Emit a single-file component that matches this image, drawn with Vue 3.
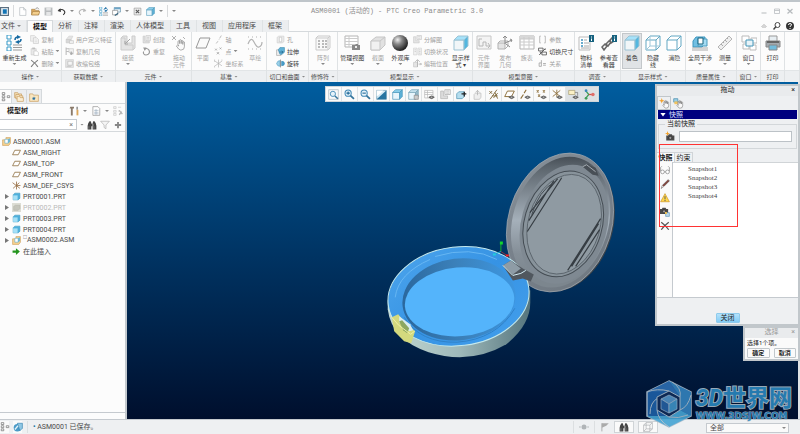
<!-- App.vue: CAD workspace with ribbon, model tree and drag dialog -->
<template>
  <div class="app">
    <header class="titlebar">
      <div class="quick">
        <template v-for="(q, i) in quickItems" :key="i">
          <i v-if="q === '|'" class="sep"></i>
          <i v-else-if="q === 'v'" class="caret"></i>
          <button v-else class="quick-btn" :aria-label="q">
            <svg viewBox="0 0 16 16" v-html="icons[q]"></svg>
          </button>
        </template>
      </div>
      <h1>ASM0001 (活动的) - PTC Creo Parametric 3.0</h1>
      <div class="win-buttons">
        <button v-for="w in ['min', 'max', 'closeWin']" :key="w" :aria-label="w">
          <svg viewBox="0 0 16 16" v-html="icons[w]"></svg>
        </button>
      </div>
    </header>

    <nav class="tabs">
      <button class="tab file">文件<i class="caret"></i></button>
      <button
        v-for="t in tabs"
        :key="t"
        :class="['tab', { active: t === activeTab }]"
        @click="activeTab = t"
      >{{ t }}</button>
      <div class="help-buttons">
        <button v-for="w in ['up', 'search', 'help']" :key="w" :aria-label="w">
          <svg viewBox="0 0 16 16" v-html="icons[w]"></svg>
        </button>
      </div>
    </nav>

    <section class="ribbon">
      <div v-for="g in groups" :key="g.name" class="group">
        <div class="group-body">
          <template v-for="(item, i) in g.items" :key="i">
            <div v-if="item.rows" class="stack">
              <button v-for="r in item.rows" :key="r[1]" :class="['small', { on: r[2] }]">
                <svg viewBox="0 0 16 16" v-html="icons[r[0]]"></svg>
                <span>{{ r[1] }}</span>
                <i v-if="r[3]" class="caret"></i>
              </button>
            </div>
            <button v-else :class="['big', { on: item.on, selected: item.selected, wide: item.wide }]">
              <svg viewBox="0 0 16 16" v-html="icons[item.icon]"></svg>
              <span v-for="line in item.label" :key="line">{{ line }}</span>
              <i v-if="item.menu" class="caret"></i>
            </button>
          </template>
        </div>
        <div class="group-name">{{ g.name }}<i v-if="g.menu" class="caret"></i></div>
      </div>
      <div class="group"><div class="group-body"></div><div class="group-name"></div></div>
    </section>

    <main class="work">
      <aside class="side">
        <div class="side-tabs">
          <button v-for="(s, i) in ['tree', 'folders', 'star']" :key="s" :class="{ active: i === 0 }" :aria-label="s">
            <svg viewBox="0 0 16 16" v-html="icons[s]"></svg>
          </button>
        </div>
        <div class="side-head">
          <strong>模型树</strong>
          <button aria-label="settings"><svg viewBox="0 0 16 16" v-html="icons.tools"></svg></button>
          <i class="caret"></i>
          <button aria-label="columns"><svg viewBox="0 0 16 16" v-html="icons.sheet"></svg></button>
          <i class="caret"></i>
          <button aria-label="show"><svg viewBox="0 0 16 16" v-html="icons.treeOff"></svg></button>
        </div>
        <div class="side-search">
          <div class="search-box">
            <input v-model="filter" type="text" aria-label="filter" />
            <button aria-label="clear" @click="filter = ''">×</button>
          </div>
          <i class="caret"></i>
          <button aria-label="find"><svg viewBox="0 0 16 16" v-html="icons.binoculars"></svg></button>
          <button aria-label="funnel"><svg viewBox="0 0 16 16" v-html="icons.funnel"></svg></button>
          <button aria-label="add"><svg viewBox="0 0 16 16" v-html="icons.plus"></svg></button>
        </div>
        <ul class="tree">
          <li v-for="n in nodes" :key="n.name" :class="{ root: n.root, off: n.off }">
            <i :class="['twist', { has: n.open }]"></i>
            <svg viewBox="0 0 16 16" v-html="icons[n.icon]"></svg>
            <span><sup v-if="n.mark">□</sup>{{ n.name }}</span>
          </li>
        </ul>
        <div class="side-foot"></div>
      </aside>

      <div class="viewport">
        <svg class="scene" viewBox="127 82 673 337">
          <defs>
            <linearGradient id="lidRim" x1="0" y1="0" x2="1" y2="1">
              <stop offset="0" stop-color="#89929a" />
              <stop offset=".5" stop-color="#77808a" />
              <stop offset="1" stop-color="#6f7880" />
            </linearGradient>
            <linearGradient id="lidBowl" x1=".1" y1="0" x2=".3" y2="1">
              <stop offset="0" stop-color="#353b42" />
              <stop offset=".14" stop-color="#5a636b" />
              <stop offset=".55" stop-color="#a5b0ba" />
              <stop offset=".8" stop-color="#848e97" />
              <stop offset="1" stop-color="#7c868e" />
            </linearGradient>
            <linearGradient id="side" x1="0" x2="1">
              <stop offset="0" stop-color="#c3d8d2" />
              <stop offset=".5" stop-color="#9fb9ba" />
              <stop offset="1" stop-color="#55757d" />
            </linearGradient>
            <linearGradient id="ring" x1="0" x2="1" y2="1">
              <stop offset="0" stop-color="#4da5ec" />
              <stop offset=".5" stop-color="#3693e4" />
              <stop offset="1" stop-color="#439fec" />
            </linearGradient>
            <linearGradient id="wall" x1="0" x2="1">
              <stop offset="0" stop-color="#2a679d" />
              <stop offset=".5" stop-color="#3b80b9" />
              <stop offset="1" stop-color="#3d96e0" />
            </linearGradient>
          </defs>
          <!-- open lid -->
          <g transform="rotate(16.6 560 222)">
            <ellipse cx="563" cy="223" rx="52" ry="70" fill="#3d444a" />
            <ellipse cx="561.500" cy="222.500" rx="52" ry="71" fill="url(#lidRim)" stroke="#a1a9b0" stroke-width=".7" />
            <ellipse cx="562" cy="222" rx="48" ry="67" fill="url(#lidBowl)" />
            <ellipse cx="566" cy="223" rx="43" ry="61" fill="#7f8992" />
            <ellipse cx="565" cy="223" rx="39" ry="54" fill="#88939b" stroke="#444c53" stroke-width="1" />
            <ellipse cx="566" cy="223" rx="36" ry="51" fill="#8f9aa2" stroke="#555e66" stroke-width=".8" />
          </g>
          <path d="M563 178 528.500 232M555 181 530 221M559 179 531 213M602 219 569 271M601 230 577 267M600 224 573 267" fill="none" stroke="#363d43" stroke-width="1.200" />
          <path d="M533 215q7-24 23-33" fill="none" stroke="#444c53" />
          <path d="M584 167l6-3 2 2 5 2 3 8-6-1z" fill="#484f56" />
          <path d="M584 167l4-2 9 7" fill="none" stroke="#a4abb1" />
          <!-- base -->
          <path d="M388.500 301v9q4 31 41 43 42 13 78-8 24-19 24-42v-12z" fill="url(#side)" />
          <ellipse cx="459.500" cy="297" rx="71" ry="49.500" transform="rotate(-7 459.500 297)" fill="url(#ring)" stroke="#c4e9ed" />
          <ellipse cx="460" cy="300" rx="57" ry="41" transform="rotate(-7 460 300)" fill="url(#wall)" />
          <ellipse cx="460.500" cy="302.500" rx="55" ry="34.500" transform="rotate(-5 460.500 302)" fill="#54b4fb" />
          <path d="M405 318q16 26 53 25 40-3 58-34" fill="none" stroke="#2f82c8" />
          <path d="M396 298q3-24 35-38M436 257q36-11 62 3" fill="none" stroke="#70bdf5" stroke-width=".8" />
          <!-- hinge -->
          <path d="M504 266l8-5 12 8 11 6-3 7-8-3-10 2z" fill="#50575e" />
          <path d="M504 266l8-5 10 8-8 6z" fill="#8e9ca6" />
          <path d="M504 266l10 10 8-2 5-3" fill="none" stroke="#d3edf5" />
          <!-- clip -->
          <path d="M392.500 318l6.500-3 5 6 12 11-4 12-7-2-10-10z" fill="#d3d97e" />
          <path d="M400 317l11 8 3 6-4 1-10-9z" fill="#d8edf0" />
          <path d="M400 322l3-1 7 8-2 5-4-3z" fill="#8ca760" />
          <path d="M392.500 318l7 8 12 9 4-3" fill="none" stroke="#eef0a8" />
          <!-- origin -->
          <path d="M502 244v8" stroke="#13b52b" />
          <path d="M502 252l6 4" stroke="#8a3243" />
          <path d="M502 252l-7 3" stroke="#1ba7c8" />
          <path d="M501 242h3v3h-3z" fill="#13d52b" />
          <path d="M507 255h3v2h-3z" fill="#f22" />
          <path d="M494 254h3v2h-3z" fill="#2cd" />
        </svg>

        <div class="view-tools">
          <button v-for="(v, i) in viewTools" :key="v" :class="{ pressed: i > 14 }" :aria-label="v">
            <svg viewBox="0 0 16 16" v-html="icons[v]"></svg>
          </button>
        </div>

        <div class="dialogs">
          <section class="drag">
            <header>拖动<button aria-label="close">×</button></header>
            <div class="drag-tools">
              <button class="active" aria-label="point drag"><svg viewBox="0 0 16 16" v-html="icons.hand"></svg></button>
              <button aria-label="body drag"><svg viewBox="0 0 16 16" v-html="icons.handBody"></svg></button>
            </div>
            <h2>快照</h2>
            <fieldset>
              <legend><label for="snap">当前快照</label></legend>
              <button aria-label="take snapshot"><svg viewBox="0 0 16 16" v-html="icons.camera"></svg></button>
              <input id="snap" v-model="current" type="text" />
            </fieldset>
            <div class="drag-tabs">
              <button class="active">快照</button>
              <button>约束</button>
            </div>
            <div class="drag-body">
              <div class="drag-icons">
                <button v-for="d in ['glasses', 'pencil', 'warn', 'cameraCopy', 'cross']" :key="d" :aria-label="d">
                  <svg viewBox="0 0 16 16" v-html="icons[d]"></svg>
                </button>
              </div>
              <ul>
                <li v-for="s in snapshots" :key="s" @click="current = s">{{ s }}</li>
              </ul>
            </div>
            <footer><button>关闭</button></footer>
            <div class="marker"></div>
          </section>
          <section class="pick">
            <header>选择<button aria-label="close">×</button></header>
            <p>选择1个项。</p>
            <div><button>确定</button><button>取消</button></div>
          </section>
        </div>
      </div>
    </main>

    <footer class="status">
      <button class="framed" aria-label="tree"><svg viewBox="0 0 16 16" v-html="icons.tree"></svg></button>
      <button class="framed" aria-label="browser"><svg viewBox="0 0 16 16" v-html="icons.globe"></svg></button>
      <i class="bar"></i>
      <p><b>•</b> ASM0001 已保存。</p>
      <i class="bar"></i>
      <svg viewBox="0 0 16 16" v-html="icons.dots"></svg>
      <i class="bar"></i>
      <svg viewBox="0 0 16 16" v-html="icons.flag"></svg>
      <button class="framed wide" aria-label="find"><svg viewBox="0 0 16 16" v-html="icons.binoculars"></svg></button>
      <button class="framed wide" aria-label="box"><svg viewBox="0 0 16 16" v-html="icons.wire"></svg></button>
      <div class="select-box">
        <select aria-label="filter">
          <option>全部</option>
        </select>
        <i class="caret"></i>
      </div>
    </footer>

    <div class="brand">
      <svg viewBox="0 0 46 48">
        <path d="M23 1 45 12v24L23 47 1 36V12z" fill="#1d5fa5" stroke="#a9bccb" stroke-width="1.500" />
        <path d="M23 1 45 12v24L34 30V17z" fill="#3382bd" />
        <path d="M45 36 23 47 1 36l22 0 11-6z" fill="#45a4d3" />
        <path d="M1 12 23 1l11 16-11-6z" fill="#2d6db0" />
        <path d="M1 12q10-4 22-1M34 17q2-9-8-15M34 30q8-3 11-15M23 37q9 2 19-2M11 30q1 10 12 17M12 18Q4 22 4 34" fill="none" stroke="#a9bccb" />
        <path d="M23 11 34 17v13l-11 7-12-7V17z" fill="#102c58" stroke="#a9bccb" />
        <path d="M23 15 31 19l-8 5-8-5z" fill="#5391c3" stroke="#9db9d0" stroke-width=".7" />
        <path d="M15 19l8 5v9l-8-4z" fill="#255f9f" stroke="#9db9d0" stroke-width=".7" />
        <path d="M31 19l-8 5v9l8-4z" fill="#3d91c4" stroke="#9db9d0" stroke-width=".7" />
      </svg>
      <div>
        <strong><em>3D</em>世界网</strong>
        <small>WWW.3DSJW.COM</small>
      </div>
    </div>
  </div>
</template>

<script setup>
import { ref } from 'vue';

const activeTab = ref('模型');
const filter = ref('');
const current = ref('');

const tabs = ['模型', '分析', '注释', '渲染', '人体模型', '工具', '视图', '应用程序', '框架'];
const snapshots = ['Snapshot1', 'Snapshot2', 'Snapshot3', 'Snapshot4'];
const quickItems = ['app', '|', 'page', 'open', 'save', 'undo', 'v', 'redo', 'v', 'regen', 'windows', 'v', 'closeBox', 'cube', 'v', '|', 'v'];
const viewTools = ['zoomFit', 'zoomIn', 'zoomOut', 'repaint', 'cube', 'cubeSaved', 'viewMgr', 'explodeOff', 'cubeArrow', 'cubeOff', 'datumAll', 'datumPlane', 'datumAxis', 'datumPoint', 'datumCsys', 'note', 'spin'];

// small rows: [icon, label, enabled, has menu]
const groups = [
  { name: '操作', menu: true, items: [
    { icon: 'regen', label: ['重新生成'], on: true, menu: true, wide: true },
    { rows: [['copy', '复制'], ['paste', '粘贴', false, true], ['cross', '删除', false, true]] },
  ] },
  { name: '获取数据', menu: true, items: [
    { rows: [['udf', '用户定义特征'], ['copyGeom', '复制几何'], ['shrink', '收缩包络']] },
  ] },
  { name: '元件', menu: true, items: [
    { icon: 'assemble', label: ['组装'], menu: true },
    { rows: [['create', '创建'], ['repeat', '重复']] },
    { icon: 'dragHand', label: ['拖动', '元件'] },
  ] },
  { name: '基准', menu: true, items: [
    { icon: 'plane', label: ['平面'] },
    { rows: [['axis', '轴'], ['point', '点', false, true], ['csys', '坐标系']] },
    { icon: 'sketch', label: ['草绘'] },
  ] },
  { name: '切口和曲面', menu: true, items: [
    { rows: [['hole', '孔'], ['extrude', '拉伸', true], ['revolve', '旋转', true]] },
  ] },
  { name: '修饰符', menu: true, items: [{ icon: 'pattern', label: ['阵列'], menu: true }] },
  { name: '模型显示', menu: true, items: [
    { icon: 'viewMgrBig', label: ['管理视图'], on: true, menu: true, wide: true },
    { icon: 'section', label: ['截面'], menu: true },
    { icon: 'sphere', label: ['外观库'], on: true, menu: true },
    { rows: [['explodeOff', '分解图'], ['toggle', '切换状况'], ['editPos', '编辑位置']] },
    { icon: 'cubeFull', label: ['显示样', '式 ▾'], on: true },
  ] },
  { name: '模型意图', menu: true, items: [
    { icon: 'iface', label: ['元件', '界面'] },
    { icon: 'publish', label: ['发布', '几何'] },
    { icon: 'table', label: ['族表'] },
    { rows: [['brackets', '参数'], ['dims', '切换尺寸', true], ['relation', '关系']] },
  ] },
  { name: '调查', menu: true, items: [
    { icon: 'bom', label: ['物料', '清单'], on: true },
    { icon: 'chain', label: ['参考查', '看器'], on: true },
  ] },
  { name: '显示样式', menu: true, items: [
    { icon: 'cubeFull', label: ['着色'], on: true, selected: true },
    { icon: 'cubeWire', label: ['隐藏', '线'], on: true },
    { icon: 'cubeLine', label: ['消隐'], on: true },
  ] },
  { name: '质量属性', menu: true, items: [
    { icon: 'interfere', label: ['全局干涉'], on: true, menu: true, wide: true },
    { icon: 'ruler', label: ['测量'], on: true, menu: true },
  ] },
  { name: '窗口', menu: true, items: [{ icon: 'winGrid', label: ['窗口'], on: true, menu: true }] },
  { name: '打印', items: [{ icon: 'printer', label: ['打印'], on: true }] },
];

const nodes = [
  { name: 'ASM0001.ASM', icon: 'asm', root: true },
  { name: 'ASM_RIGHT', icon: 'treePlane' },
  { name: 'ASM_TOP', icon: 'treePlane' },
  { name: 'ASM_FRONT', icon: 'treePlane' },
  { name: 'ASM_DEF_CSYS', icon: 'treeCsys' },
  { name: 'PRT0001.PRT', icon: 'part', open: true },
  { name: 'PRT0002.PRT', icon: 'partOff', open: true, off: true },
  { name: 'PRT0003.PRT', icon: 'part', open: true },
  { name: 'PRT0004.PRT', icon: 'part', open: true },
  { name: 'ASM0002.ASM', icon: 'asm', open: true, mark: true },
  { name: '在此插入', icon: 'insert' },
];

// path with fill and stroke
const p = (d, fill = 'none', stroke = 'none', w = 1) =>
  `<path d="${d}" fill="${fill}" stroke="${stroke}" stroke-width="${w}"/>`;
const box = (front, top, side, line) =>
  p('M1 5h10v10H1z', front, line) + p('M1 5l4-4h10l-4 4z', top, line) + p('M11 5l4-4v10l-4 4z', side, line);
const eye = p('M7 12q4-4 8 0q-4 4-8 0z', '#777', '#555') + p('M10 12h2', 'none', '#ddd');
const glass = '<circle cx="6" cy="6" r="4.500" fill="#e5f2fa" stroke="#3f88b5" stroke-width="1.500"/>' + p('M9.500 9.500l5 5', 'none', '#35749b', 2.5);
const handShape = p('M5 8V4q1-1 2 0v3V2.500q1-1 2 0V7 3.500q1-1 2 0V8 5q1-1 2 0v6q0 4-4 4H8q-2 0-5-5 1-2 3 0z', '#fafafa', '#777', 1);
const camera = p('M2 7h3l1-2h5l1 2h3v8H2z', '#4a4a4a') + '<circle cx="8.500" cy="11" r="2.500" fill="#999" stroke="#222"/>';
const spark = p('M4 0l1 3 3 1-3 1-1 3-1-3-3-1 3-1z', '#f3a22b');

const icons = {
  app: p('M0 0h16v16H0z', '#5c6f80') + p('M2 2h12v12H2z', '#e5edf3') + p('M5 4h7v8H5z', '#1274b5'),
  page: p('M3 1h7l4 4v10H3z', '#fff', '#a5adb3') + p('M10 1v4h4', 'none', '#a5adb3'),
  open: p('M1 4h6l1 2h6v8H1z', '#d9a75c', '#a27a3d') + p('M3 8h13l-3 6H1z', '#f3ce8c', '#a27a3d') + p('M8 3q4-4 6 1', 'none', '#555'),
  save: p('M1 1h14v14H1z', '#b9bcbe') + p('M4 1h8v5H4zM4 9h8v6H4z', '#e5e6e7'),
  undo: p('M3 6q9-4 11 3 0 3-3 5', 'none', '#333', 2) + p('M1 7l5-5 1 7z', '#333'),
  redo: p('M13 6Q4 2 2 9q0 3 3 5', 'none', '#b8b8b8', 2) + p('M15 7l-5-5-1 7z', '#b8b8b8'),
  regen: p('M1 0h4v4H1zM1 6h4v4H1zM1 12h4v4H1z', '#fff', '#3397c6') + p('M7 10h9M7 12.500h9M7 15h9', 'none', '#9a9a9a') + p('M9 5q0-3 3-3M15 4q0 3-3 3', 'none', '#176aa2', 1.5) + p('M11 0l4 2-4 2zM13 5v4L9 7z', '#176aa2'),
  windows: p('M4 1h11v8H4z', '#eaf4fa', '#447a9b') + p('M4 1h11v3H4z', '#6ca5c7') + p('M1 6h9v8H1z', '#fff', '#777') + p('M5 15l6-4', 'none', '#34637e', 2),
  closeBox: p('M2 2h12v12H2z', '#eee', '#888') + p('M5 5l6 6M11 5l-6 6', 'none', '#555', 2),
  cube: box('#e7f5fc', '#8cd0ec', '#5cb1d7', '#4c97ba'),
  cubeFull: box('#f1f6f8', '#a6e2fa', '#53b7df', '#9cc3d4'),
  cubeWire: p('M1 5h10v10H1zM1 5l4-4h10l-4 4M15 1v10l-4 4', '#fff', '#62a7c3') + p('M5 1v10h10M5 11l-4 4', 'none', '#9fc8da'),
  cubeLine: p('M1 5h10v10H1zM1 5l4-4h10l-4 4M15 1v10l-4 4', '#fff', '#62a7c3'),
  min: p('M3 11h10v2H3z', '#b6babd'),
  max: p('M3 4h10v9H3zM3 7h10', 'none', '#b6babd', 1.5),
  closeWin: p('M3 4l10 9M13 4L3 13', 'none', '#b6babd', 2.5),
  up: p('M3 10l5-5 5 5M5 12l3-3 3 3', 'none', '#777', 1.2),
  search: '<circle cx="9" cy="6" r="5" fill="#fff" stroke="#444" stroke-width="2"/>' + p('M6 9l-5 6', 'none', '#444', 3),
  help: '<circle cx="8" cy="8" r="8" fill="#333"/>' + p('M5 6q0-3 3-3t3 3q0 1-3 3v1M8 12v2', 'none', '#fff', 2),
  copy: p('M1 1h7l2 2v8H1z', '#eee', '#bbb') + p('M6 5h6l3 3v7H6z', '#f6f6f6', '#aaa') + p('M8 9h5M8 12h5', 'none', '#bbb'),
  paste: p('M2 3h9v11H2z', '#e3e3e3', '#b5b5b5') + p('M4 1h5v3H4z', '#aaa') + p('M7 7h5l3 3v5H7z', '#fff', '#aaa'),
  cross: p('M2 2q7 5 12 12M14 2Q6 8 2 14', 'none', '#555', 2),
  udf: p('M2 8l5-6h7l-3 6z', '#ddd', '#bbb') + p('M2 8h9v6H2z', '#ccc', '#b5b5b5') + p('M8 10h7v5H8z', '#eee', '#aaa'),
  copyGeom: p('M2 1v13M2 8h5M2 3h5', 'none', '#aaa', 2) + p('M7 3h8v7H7z', '#eee', '#aaa') + p('M11 8v6M9 12h6', 'none', '#888', 2),
  shrink: p('M1 1h14v14H1z', '#ddd', '#bbb') + p('M5 4h8v7H5z', '#f5f5f5', '#999') + p('M3 13h8', 'none', '#999'),
  assemble: p('M1 3l2-2h4v7h5V1h3v12l-2 2H1z', '#ddd', '#bdbdbd') + p('M1 3h4v7h8v5', 'none', '#bdbdbd') + p('M10 4L5 9M5 6v3h3', 'none', '#888'),
  create: p('M2 2h3v9h8v3H2z', '#ddd', '#aaa') + p('M7 1h8v9H7z', '#eee', '#aaa') + p('M9 4h4M9 7h4', 'none', '#999'),
  repeat: p('M4 4q5-3 8 1 3 5-1 8-5 3-8-1-1-2 0-4', 'none', '#777', 2) + p('M2 1h6L5 7z', '#777'),
  dragHand: '<g transform="translate(3 3) scale(.8)">' + handShape + '</g>' + p('M1 1l4 4M5 1L1 5M12 2l2 2', 'none', '#999'),
  plane: p('M5 3h10l-4 10H1z', '#fafafa', '#777'),
  axis: p('M13 1l-3 5M9 8l-1 1M7 11l-3 4', 'none', '#999', 1.5),
  point: p('M2 3l3 3M5 3L2 6M10 1l3 3M13 1l-3 3M5 9l4 4M9 9l-4 4', 'none', '#888', 1.5),
  csys: p('M8 1v14M2 4l12 8M14 4L2 12M1 1v4M1 12v3M14 1v2', 'none', '#999', 1.2),
  sketch: p('M1 9q3-8 6-2t5 5q3-1 3-5', 'none', '#999', 1.2) + p('M1 2h1M5 2h1M9 2h1M13 2h1M1 14h1M5 14h1M9 14h1M13 14h1', 'none', '#999'),
  hole: p('M2 4l3-2h9v10l-3 2H2z', '#e5e5e5', '#bbb') + p('M6 4h4v8H6z', '#fff', '#aaa'),
  extrude: p('M1 5h8v10H1z', '#eee', '#999') + p('M4 5l3-4h8v8l-4 4H7z', '#62b3d8', '#3987ad') + p('M6 9h6M10 7l3 2-3 2', 'none', '#135276'),
  revolve: p('M1 8q2-6 6-5v10Q2 13 1 8z', '#9cd0e8', '#55a0c4') + p('M10 4q5 0 5 4t-5 4z', '#4aa0cc', '#2c80ab') + p('M8 1v14', 'none', '#555'),
  pattern: p('M1 3h12v12H1zM1 3l2-2h12v12l-2 2M13 3l2-2', '#f8f8f8', '#bbb') + p('M3 6h2M7 6h2M10 6h2M3 9h2M7 9h2M10 9h2M3 12h2M7 12h2M10 12h2', 'none', '#888', 1.5),
  viewMgrBig: p('M1 1h13v11H1z', '#fff', '#b5b5b5') + p('M1 3.500h13M1 6.500h13M1 9.500h13M5 1v11', 'none', '#ccc') + p('M8 10h3l1-1h2v1h2v5H8z', '#888') + p('M11 12h2', 'none', '#eee', 2),
  section: p('M1 6l5-4h9v8l-5 5H1z', '#d8d8d8', '#b5b5b5') + p('M1 6h9v9H1z', '#eee', '#b5b5b5') + p('M10 6l5-4', 'none', '#b5b5b5'),
  sphere: '<defs><radialGradient id="ball" cx=".35" cy=".3" r=".7"><stop offset="0" stop-color="#eee"/><stop offset=".4" stop-color="#888"/><stop offset="1" stop-color="#222"/></radialGradient></defs><circle cx="8" cy="8" r="8" fill="url(#ball)"/>',
  explodeOff: p('M1 3h4v7h6v4H1z', '#ddd', '#b5b5b5') + p('M7 1h8v7H7z', '#f0f0f0', '#aaa') + p('M9 3h4M9 6h4', 'none', '#b5b5b5'),
  toggle: p('M1 2h6v12H1zM9 2h6v12H9z', '#eee', '#bbb') + p('M3 5h2M3 8h2M11 5h2M11 8h2M11 11h2', 'none', '#999'),
  editPos: p('M1 6h7v8H1z', '#ddd', '#aaa') + p('M8 2v12M4 5l4-4 4 4M10 9h5M13 7l2 2-2 2', 'none', '#999', 1.5),
  iface: p('M1 1h14v13H1z', '#f1f1f1', '#b5b5b5') + p('M3 4v7h4V7h3v4h4M3 4h3M12 8l2 3-2 2', 'none', '#a0a0a0'),
  publish: p('M1 8h7v6H1z', '#ddd', '#999') + p('M1 8l2-2h8v5l-3 3', 'none', '#999') + p('M8 9V1M6 3l2-2 2 2M8 8l7-3M13 4l2 1-1 2M9 9l4 3', 'none', '#666'),
  table: p('M1 1h14v13H1z', '#fff', '#999') + p('M1 1h14v3H1z', '#ccc') + p('M1 4h14M1 7h14M1 10h14M5 2v12M10 2v12', 'none', '#bbb'),
  brackets: p('M5 2H3v12h2M11 2h2v12h-2', 'none', '#999', 1.5),
  dims: p('M1 2h8M1 2v5h8V2M7 9h8v5H7zM2 14L13 3', 'none', '#555', 1.5) + p('M3 9h2v4M11 4h3', 'none', '#555', 1.5),
  relation: p('M6 2v11H2V7h4M9 8h5M9 11h5', 'none', '#888', 1.5),
  bom: p('M1 2h11v13H1z', '#fff', '#bbb') + p('M3 5h2M3 8h2M3 11h2', 'none', '#3a91bd', 1.5) + p('M6 5h3M6 8h5M6 11h5M3 13h8', 'none', '#aaa') + p('M11 0h5v7h-5z', '#17627f') + p('M13.500 1.500v1M13.500 3.500V6', 'none', '#fff'),
  chain: p('M1 12l3-3 2 2-3 4zM5 9l3-3 2 1-3 4zM9 5l2-2 2 3-3 2z', 'none', '#666', 1.5) + p('M11 0h5v7h-5z', '#17627f') + p('M13.500 1.500v1M13.500 3.500V6', 'none', '#fff'),
  interfere: p('M1 6l3-4h9v7l-3 3H1z', '#71bfe2', '#3d95bd') + p('M6 4h9v7H6z', '#a5dcf3', '#4b9abc') + p('M6 3h5v6H6z', '#fff', '#17627f') + p('M0 13h16M0 15h16', 'none', '#aaa'),
  ruler: p('M1 12L12 1l3 3L4 15z', '#eee', '#b5b5b5') + p('M4 9l2 2M6 7l1 1M8 5l2 2M10 3l1 1', 'none', '#aaa'),
  winGrid: p('M1 1h7v6H1zM10 3h6v5h-6zM2 9h6v5H2zM9 10h6v5H9z', '#fff', '#bbb') + p('M5 5h7v6H5z', '#e8f4f9', '#4698ba'),
  printer: p('M4 1h8v6H4z', '#e7eef2', '#999') + p('M1 6h14v6H1z', '#a5abb0', '#888') + p('M2 7h12', 'none', '#666', 2) + p('M4 10h8v5H4z', '#72bcdc', '#888'),
  tree: p('M2 1h4v3H2zM2 6h4v3H2zM2 11h4v3H2zM10 6h4v3h-4z', '#fff', '#777', 1.2),
  folders: p('M1 1h5l1 2h5v6H1z', '#f5dfb8', '#c39755') + p('M3 4h5l1 2h5v5H3z', '#f8e7c8', '#c39755') + p('M5 7h4l1 2h5v6H5z', '#fbeed4', '#c39755'),
  star: p('M1 3h5l1 2h8v10H1z', '#f9e6c0', '#c39755') + p('M8 7l1 2h2l-2 2v2l-2-1-1 1v-2L5 9h2z', '#286f9f'),
  tools: p('M2 1h6v3H6v11H3V4H1z', '#8a7a6a') + p('M13 1v5', 'none', '#777', 2) + p('M12 6h3v9h-3z', '#dca75a'),
  sheet: p('M3 1h8l3 3v11H3z', '#fff', '#888') + p('M5 7h7M5 10h7M5 12.500h7M8 5v9', 'none', '#9ab', 1),
  treeOff: p('M1 1h4v3H1zM1 7h4v3H1zM1 12h4v3H1zM8 2h5M8 8h3', '#f6f6f6', '#c5c5c5') + p('M10 7l5 6M14 9l-4 5', 'none', '#b5b5b5', 2),
  binoculars: p('M2 5l2-3h2l1 3v10H1V9zM14 5l-2-3h-2L9 5v10h6V9zM6 6h4v4H6z', '#444') + p('M3 10v4M11 10v4', 'none', '#999'),
  funnel: p('M1 2h14L9.500 8v6l-3-2V8z', '#f5f5f5', '#aaa'),
  plus: p('M8 3v10M3 8h10', 'none', '#888', 3),
  asm: p('M1 5h6V1h8v10l-3 4H1z', '#f6d18f', '#c79a52') + p('M5 4h6v7H5z', '#fff', '#57a9cd') + p('M11 4l3-2v7l-3 2z', '#5db4da'),
  treePlane: p('M5 4h10l-4 8H1z', '#fff', '#93764a', 1.5),
  treeCsys: p('M8 1v14M1 3l13 10M13 3L2 13M9 8h6', 'none', '#93683c', 1.4),
  part: p('M2 5l3-3h9v9l-3 3H2z', '#4fb0dc', '#4199c0') + p('M2 6h8v8H2z', '#a6e0f6'),
  partOff: p('M0 0h16v16H0z', '#ddddd4') + p('M3 6l3-2h8v6l-3 3H3z', '#c5c5bb', '#b2b2a8'),
  insert: p('M1 6h6V2l7 6-7 6v-4H1z', '#25951f'),
  zoomFit: p('M1 1h14v14H1z', 'none', '#a5b5bf') + '<g transform="translate(2 2) scale(.85)">' + glass + '</g>',
  zoomIn: glass + p('M3.500 6h5M6 3.500v5', 'none', '#1c6594', 1.5),
  zoomOut: glass + p('M3.500 6h5', 'none', '#1c6594', 1.5),
  repaint: p('M1 2h14v13H1z', '#d6ebf5', '#6597b1') + p('M1 15L15 2v13z', '#2774a0') + p('M1 2h10L1 11z', '#fff'),
  cubeSaved: box('#e7f5fc', '#c6e2ee', '#94b9c9', '#79a5b8') + p('M9 9h6v6H9z', '#ccc', '#888'),
  viewMgr: p('M1 2h12v11H1zM1 5h12M1 8h12M5 2v11', '#fff', '#b5b5b5') + eye,
  cubeArrow: p('M1 7l3-3h8v7l-3 3H1z', '#b5ddee', '#4e95b4') + p('M8 7h7M12 4v7', 'none', '#222', 1.8),
  cubeOff: p('M3 8l2-2h8v6l-2 3H3z', '#eee', '#bbb') + p('M8 9V2M5 5l3-3 3 3', 'none', '#aaa'),
  datumAll: p('M2 3l4 4M6 3L2 7M13 1L3 15M6 10h8M10 5l4 9M14 6l-6 7', 'none', '#7c6434', 1.3),
  datumPlane: p('M5 3h10l-4 8H1z', '#fff', '#8d6f3b', 1.4) + eye,
  datumAxis: p('M9 1L6 6M5 8L1 14', 'none', '#8d6f3b', 1.6) + eye,
  datumPoint: p('M1 2l3 3M4 2L1 5M10 2l3 3M13 2l-3 3M3 8l3 3M6 8l-3 3', 'none', '#8d6f3b', 1.5) + eye,
  datumCsys: p('M7 1v11M1 2l11 9M12 2L1 11', 'none', '#8d6f3b', 1.3) + eye,
  note: p('M1 2h9v6H1z', '#fbf0c5', '#a69a70') + p('M10 5l4 0v5', 'none', '#777') + eye,
  spin: p('M2 2l5 6-5 6', 'none', '#3f9d57', 1.8) + p('M7 8h7', 'none', '#d34f4a', 1.8) + '<circle cx="13" cy="8" r="2.500" fill="#e06e69"/><circle cx="3" cy="2.500" r="2" fill="#3b87b9"/><circle cx="3" cy="13.500" r="2" fill="#3f9d57"/>',
  hand: spark + '<g transform="translate(3 2) scale(.85)">' + handShape + '</g>',
  handBody: p('M1 1h6v5H1z', '#9ccfe5', '#438bad') + p('M2 5h5v4H2z', '#f1c35f') + '<g transform="translate(3 2) scale(.85)">' + handShape + '</g>',
  camera: camera + spark,
  cameraCopy: '<g transform="translate(-2 -4)">' + camera + '</g>' + p('M9 9h6v6H9z', '#b8d7ea', '#5a92b5') + p('M8 8h3v3H8z', '#f0c24f'),
  glasses: '<circle cx="4" cy="11" r="3" fill="#fff" stroke="#777"/><circle cx="12" cy="11" r="3" fill="#fff" stroke="#777"/>' + p('M1 10V4l2-2M15 10V4l-2-2M7 11h2', 'none', '#777'),
  pencil: p('M2 15l2-5 9-9 2 2-9 9z', '#8c4138', '#555') + p('M2 15l2-5 2 2z', '#ddd'),
  warn: p('M8 1l7 13H1z', '#ffd84d', '#c78d1b') + p('M8 5v5M8 11v2', 'none', '#555', 1.5),
  globe: '<circle cx="7" cy="9" r="6" fill="#4b9bc8"/>' + p('M7 2h8v8l-4 4z', '#8fc7e4', '#2e7fae') + p('M3 12l5-6', 'none', '#e5f4fb', 2),
  dots: '<circle cx="8" cy="8" r="4" fill="#b0b4b7"/><circle cx="1.500" cy="8" r="1.500" fill="#c9cccf"/><circle cx="14.500" cy="8" r="1.500" fill="#c9cccf"/>',
  flag: p('M3 2v13', 'none', '#aaa', 1.5) + p('M3 2h11l-4 4-7 3z', '#aaa'),
  wire: p('M1 5h10v10H1zM1 5l4-4h10l-4 4M15 1v10l-4 4M5 1v10h10M5 11l-4 4', 'none', '#a5a9ac'),
};
</script>

<style>
body {
  margin: 0;
}
</style>

<style scoped>
.app {
  position: relative;
  display: flex;
  flex-direction: column;
  min-height: 100vh;
  box-sizing: border-box;
  border-top: 2px solid #bfc5ca;
  background: #fcfcfc;
  color: #4a4a4a;
  font: 7px/8px Roboto, "Noto Sans CJK SC", sans-serif;
  overflow: hidden;
}
.app * {
  box-sizing: border-box;
}
button,
input,
select {
  margin: 0;
  padding: 0;
  border: 0;
  background: none;
  color: inherit;
  font: inherit;
}
svg {
  display: block;
  flex: none;
}
h1, h2, p, ul {
  margin: 0;
  padding: 0;
  font: inherit;
  list-style: none;
}
.caret {
  flex: none;
  width: 4px;
  height: 2px;
  background: #888;
  clip-path: polygon(0 0, 100% 0, 50% 100%);
}

/* title bar */
.titlebar {
  display: grid;
  grid-template-columns: 1fr auto 1fr;
  align-items: center;
  height: 18px;
  padding-right: 6px;
}
.titlebar h1 {
  color: #8c8c8c;
  font-family: "Liberation Mono", "Noto Sans CJK SC", monospace;
}
.quick {
  display: flex;
  align-items: center;
  gap: 4px;
}
.quick svg {
  width: 9px;
  height: 9px;
}
.sep {
  width: 1px;
  height: 12px;
  background: #d8dadc;
}
.win-buttons,
.help-buttons {
  display: flex;
  justify-content: flex-end;
  gap: 5px;
}
.win-buttons svg,
.help-buttons svg {
  width: 8px;
  height: 8px;
}

/* ribbon tabs */
.tabs {
  display: flex;
  height: 12px;
  border-bottom: 1px solid #d5d9dc;
}
.tab {
  height: 12px;
  padding: 0 6px 0 5px;
  border-right: 1px solid #dfe2e4;
  background: #eceef0;
}
.tab.file {
  display: flex;
  align-items: center;
  gap: 2px;
  width: 27px;
  padding: 0 0 0 1px;
}
.tab.active {
  border: 1px solid #d5d9dc;
  border-bottom: 0;
  padding: 0 5px;
  background: #fcfcfc;
  color: #111;
  font-weight: bold;
}
.help-buttons {
  margin-left: auto;
  padding-right: 6px;
}

/* ribbon */
.ribbon {
  display: grid;
  grid-template-columns: 62fr 54fr 76fr 75fr 42fr 29fr 135fr 102fr 46fr 65fr 51fr 24fr 24fr 15fr;
  font-size: 6px;
  line-height: 7px;
}
.group {
  min-width: 0;
  border-right: 1px solid #dfe2e4;
}
.group-body {
  display: flex;
  justify-content: space-around;
  height: 38px;
  padding: 1px 0;
}
.group-name {
  display: flex;
  align-items: center;
  justify-content: center;
  gap: 2px;
  height: 12px;
  border-top: 1px solid #e2e5e7;
  background: #edeff1;
  white-space: nowrap;
}
.big {
  display: flex;
  flex-direction: column;
  align-items: center;
  width: 20px;
  padding-top: 2px;
  color: #a5a5a5;
  white-space: nowrap;
}
.big.wide {
  width: 26px;
}
.big svg {
  width: 16px;
  height: 16px;
  margin-bottom: 3px;
}
.big svg,
.small svg {
  opacity: 0.75;
}
.big.on svg,
.small.on svg {
  opacity: 1;
}
.big .caret {
  margin-top: 2px;
}
.big.on,
.small.on {
  color: #3a3a3a;
}
.big.selected {
  border: 1px solid #c3c7ca;
  padding-top: 1px;
  background: #e0e3e6;
}
.small {
  display: flex;
  align-items: center;
  gap: 2px;
  height: 12px;
  color: #a0a0a0;
  white-space: nowrap;
}
.small svg {
  width: 9px;
  height: 9px;
}

/* model tree */
.work {
  display: flex;
  flex: 1;
}
.side {
  display: flex;
  flex-direction: column;
  flex: none;
  width: 127px;
  border-right: 2px solid #c3c9ce;
}
.side svg {
  width: 10px;
  height: 10px;
}
.side-tabs {
  display: flex;
  height: 22px;
  padding-top: 7px;
  border-bottom: 1px solid #d5d9dc;
}
.side-tabs button {
  display: flex;
  align-items: center;
  justify-content: center;
  width: 15px;
  border: 1px solid #d5d9dc;
  border-width: 1px 1px 0 0;
  background: #eceef0;
}
.side-tabs button.active {
  width: 12px;
  background: #fcfcfc;
}
.side-head,
.side-search {
  display: flex;
  align-items: center;
  gap: 4px;
  height: 14px;
  padding-right: 2px;
}
.side-head strong {
  flex: 1;
  padding-left: 7px;
  color: #222;
}
.side-search {
  gap: 3px;
  border-bottom: 1px solid #d5d9dc;
}
.search-box {
  display: flex;
  flex: 1;
  min-width: 0;
  height: 11px;
  border: 1px solid #c5cacf;
  border-left: 0;
  background: #fff;
}
.search-box input {
  flex: 1;
  min-width: 0;
}
.search-box button {
  width: 10px;
  color: #777;
}
.tree {
  flex: 1;
  padding-top: 4px;
}
.tree li {
  display: flex;
  align-items: center;
  gap: 2px;
  height: 11px;
  padding-left: 4px;
}
.tree li svg {
  width: 9px;
  height: 9px;
}
.tree li.root {
  padding-left: 0;
}
.tree li.root .twist {
  display: none;
}
.tree li.root svg {
  margin-left: 2px;
}
.tree li.off {
  color: #b9b9b9;
}
.tree sup {
  font-size: 4px;
  line-height: 4px;
}
.twist {
  width: 4px;
  height: 5px;
  margin: 0 1px;
}
.twist.has {
  background: #777;
  clip-path: polygon(0 0, 100% 50%, 0 100%);
}
.side-foot {
  height: 7px;
  border-top: 1px solid #c5cacf;
}

/* graphics area */
.viewport {
  position: relative;
  flex: 1;
  min-width: 0;
  border-right: 2px solid #dfe3e6;
  background: linear-gradient(#005d9f, #00315f 55%, #000f2d);
}
.scene {
  width: 100%;
}
.view-tools {
  position: absolute;
  top: 4px;
  left: 198px;
  display: flex;
  border: 1px solid #cfd5d9;
  background: #fafafa;
}
.view-tools button {
  display: flex;
  align-items: center;
  justify-content: center;
  width: 16px;
  height: 14px;
  border-right: 1px solid #e0e3e5;
}
.view-tools button.pressed {
  background: #dde1e4;
}
.view-tools svg {
  width: 11px;
  height: 11px;
}

/* floating dialogs */
.dialogs {
  position: absolute;
  top: 2px;
  right: -2px;
  display: flex;
  flex-direction: column;
  align-items: flex-end;
  width: 145px;
  color: #222;
}
.drag {
  position: relative;
  width: 100%;
  border: 2px solid #c1c7cb;
  background: #eef0f2;
}
.drag > header,
.pick > header {
  display: flex;
  justify-content: center;
  height: 10px;
  background: #e9ebed;
}
.drag > header button,
.pick > header button {
  position: absolute;
  right: 3px;
}
.drag-tools {
  display: flex;
  height: 14px;
}
.drag-tools button {
  display: flex;
  align-items: center;
  justify-content: center;
  width: 14px;
}
.drag-tools button.active {
  border: 1px solid #c1c7cb;
}
.drag-tools svg {
  width: 11px;
  height: 11px;
}
.drag h2 {
  display: flex;
  align-items: center;
  gap: 3px;
  height: 9px;
  margin: 0 1px;
  padding-left: 2px;
  background: #00007f;
  color: #dfe3ff;
}
.drag h2::before {
  content: "";
  width: 6px;
  height: 4px;
  background: #fff;
  clip-path: polygon(0 0, 100% 0, 50% 100%);
}
.drag fieldset {
  display: flex;
  align-items: flex-start;
  gap: 4px;
  height: 29px;
  margin: 1px 1px 3px;
  padding: 3px 4px 0 6px;
  border: 1px solid #d3d7da;
}
.drag legend {
  padding: 0 2px;
}
.drag fieldset svg {
  width: 10px;
  height: 10px;
}
.drag fieldset input {
  flex: 1;
  height: 11px;
  border: 1px solid #bcc2c7;
  background: #fff;
}
.drag-tabs {
  display: flex;
  height: 10px;
}
.drag-tabs button {
  width: 18px;
  border: 1px solid #d0d4d7;
  border-width: 1px 1px 0 0;
}
.drag-tabs button.active {
  background: #fafafa;
  font-weight: bold;
}
.drag-body {
  display: flex;
  height: 136px;
  border-bottom: 1px solid #c5cacf;
}
.drag-icons {
  display: flex;
  flex-direction: column;
  align-items: center;
  gap: 4px;
  width: 16px;
  padding-top: 3px;
  border-right: 1px solid #c5cacf;
  background: #fafafa;
}
.drag-icons svg {
  width: 10px;
  height: 10px;
}
.drag-body ul {
  flex: 1;
  padding: 2px 0 0 15px;
  background: #fff;
  border-top: 1px solid #d0d4d7;
  color: #444;
  font-family: "Liberation Serif", serif;
}
.drag-body li {
  height: 9px;
}
.drag > footer {
  display: flex;
  justify-content: center;
  height: 26px;
  padding-top: 15px;
}
.drag > footer button {
  width: 24px;
  height: 10px;
  border: 1px solid #8ecbec;
  border-radius: 1px;
  background: linear-gradient(#b4e2fb, #82cbf5);
}
.marker {
  position: absolute;
  top: 58px;
  left: 2px;
  width: 79px;
  height: 83px;
  border: 1px solid #f33;
}
.pick {
  position: relative;
  width: 57px;
  border: 2px solid #c1c7cb;
  background: #fafafa;
}
.pick > header {
  color: #999;
}
.pick p {
  padding: 1px 2px;
  font-size: 6px;
}
.pick div {
  display: flex;
  gap: 4px;
  height: 11px;
  padding: 0 2px 1px;
}
.pick div button {
  flex: 1;
  border: 1px solid #c1c7cb;
  border-radius: 1px;
  font-size: 6px;
  line-height: 8px;
  font-weight: bold;
}

/* status bar */
.status {
  display: flex;
  align-items: center;
  gap: 4px;
  height: 15px;
  padding-right: 11px;
  border-top: 1px solid #c5cacf;
  background: #eef0f2;
}
.status svg {
  width: 10px;
  height: 10px;
}
.status p {
  flex: 1;
}
.status p b {
  color: #17749f;
}
.status .bar {
  width: 1px;
  height: 12px;
  margin: 0 1px;
  background: #dcdfe1;
}
.framed {
  display: flex;
  align-items: center;
  justify-content: center;
  width: 9px;
  height: 12px;
  background: #fafafa;
}
.framed.wide {
  width: 20px;
  border: 1px solid #d0d4d7;
}
.select-box {
  display: flex;
  align-items: center;
  width: 83px;
  height: 10px;
  margin: 2px 0 0 44px;
  padding-right: 2px;
  border: 1px solid #c5cacf;
  background: #fafafa;
}
.select-box select {
  flex: 1;
  height: 8px;
  padding-left: 3px;
  appearance: none;
}

/* site mark */
.brand {
  position: absolute;
  right: 8px;
  bottom: 6px;
  display: flex;
  align-items: flex-start;
  gap: 4px;
  opacity: 0.9;
  pointer-events: none;
}
.brand > svg {
  width: 46px;
  height: 48px;
}
.brand div {
  display: flex;
  flex-direction: column;
  padding-top: 7px;
}
.brand strong {
  color: #2a86bd;
  font-size: 23px;
  line-height: 24px;
  -webkit-text-stroke: 2px #a9bac6;
  paint-order: stroke fill;
}
.brand small {
  color: #2a86bd;
  font: bold 9px/10px "DejaVu Sans", sans-serif;
  -webkit-text-stroke: 1px #a9bac6;
  paint-order: stroke fill;
}
</style>
